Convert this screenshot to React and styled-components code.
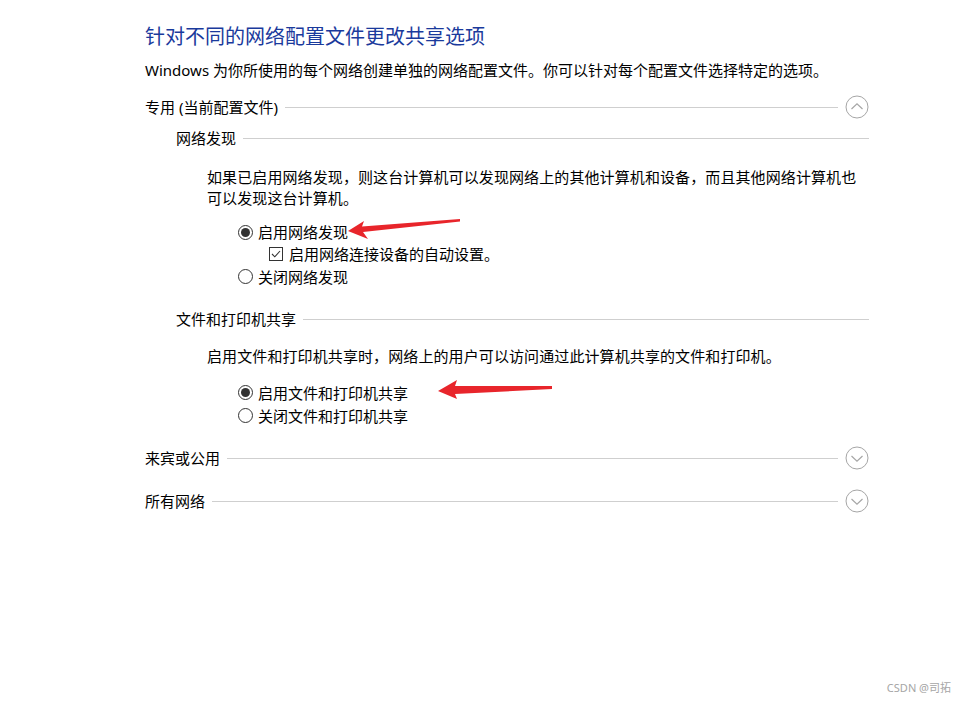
import React from "react";
import styled, { createGlobalStyle } from "styled-components";

const Global = createGlobalStyle`
  html, body { margin: 0; padding: 0; background: #ffffff; }
  body {
    font-family: "Noto Sans", "Noto Sans CJK SC", sans-serif;
    color: #000;
    -webkit-font-smoothing: antialiased;
  }
`;

const Page = styled.div`
  position: relative;
  width: 965px;
  height: 703px;
  box-sizing: border-box;
  padding: 22px 96px 0 145px;
  overflow: hidden;
`;

const Title = styled.h1`
  margin: 0;
  font-weight: 400;
  font-size: 20px;
  line-height: 28px;
  color: #1a3a9c;
  font-family: "Noto Sans CJK SC", sans-serif;
`;

const Desc = styled.p`
  margin: 10px 0 0;
  font-size: 15px;
  line-height: 20px;
`;

const Header = styled.div`
  display: flex;
  align-items: center;
  height: ${(p) => (p.$main ? 24 : 20)}px;
  margin-top: ${(p) => p.$mt}px;
  margin-left: ${(p) => p.$indent || 0}px;
  font-size: 15px;
  line-height: 20px;
`;

const Rule = styled.span`
  flex: 1;
  height: 1px;
  background: #cfcfcf;
  margin-left: 7px;
`;

const Toggle = styled.button`
  all: unset;
  display: flex;
  width: 24px;
  height: 24px;
  margin-left: 7px;
  cursor: pointer;
`;

const Para = styled.p`
  margin: ${(p) => p.$mt}px 0 0 62px;
  width: 660px;
  font-size: 15px;
  line-height: 21px;
  letter-spacing: 0.1px;
`;

const Options = styled.div`
  margin: ${(p) => p.$mt}px 0 0 93px;
  display: flex;
  flex-direction: column;
`;

const OptionRow = styled.label`
  display: flex;
  align-items: center;
  height: ${(p) => p.$h}px;
  padding-left: ${(p) => (p.$sub ? 31 : 0)}px;
  font-size: 15px;
  line-height: 20px;
  gap: ${(p) => (p.$sub ? 6 : 5)}px;
`;

const Radio = styled.span`
  box-sizing: border-box;
  width: 15px;
  height: 15px;
  border-radius: 50%;
  border: 1px solid #333;
  display: flex;
  align-items: center;
  justify-content: center;
  &::after {
    content: "";
    display: ${(p) => (p.$checked ? "block" : "none")};
    width: 9px;
    height: 9px;
    border-radius: 50%;
    background: #333;
  }
`;

const Check = styled.span`
  box-sizing: border-box;
  width: 14px;
  height: 14px;
  border: 1px solid #333;
  display: flex;
  align-items: center;
  justify-content: center;
`;

const Overlay = styled.svg`
  position: absolute;
  left: 0;
  top: 0;
  pointer-events: none;
`;

const Watermark = styled.div`
  position: absolute;
  right: 14px;
  bottom: 8px;
  font-size: 11px;
  color: #a6a6a6;
  font-family: "Noto Sans", "Noto Sans CJK SC", sans-serif;
`;

function Chevron({ up }) {
  return (
    <svg width="24" height="24" viewBox="0 0 24 24">
      <circle cx="12" cy="12" r="11" fill="none" stroke="#a6a6a6" strokeWidth="1" />
      <polyline
        points={up ? "6.5,14 12,8.8 17.5,14" : "6.5,10 12,15.2 17.5,10"}
        fill="none"
        stroke="#a6a6a6"
        strokeWidth="1.2"
      />
    </svg>
  );
}

function SectionHeader({ label, up, mt, main, indent }) {
  return (
    <Header $main={main} $mt={mt} $indent={indent}>
      <span>{label}</span>
      <Rule />
      {main && (
        <Toggle aria-label={label}>
          <Chevron up={up} />
        </Toggle>
      )}
    </Header>
  );
}

function RadioOption({ checked, children, h }) {
  return (
    <OptionRow $h={h}>
      <Radio $checked={checked} />
      <span>{children}</span>
    </OptionRow>
  );
}

export default function App() {
  return (
    <>
      <Global />
      <Page>
        <Title>针对不同的网络配置文件更改共享选项</Title>
        <Desc>Windows 为你所使用的每个网络创建单独的网络配置文件。你可以针对每个配置文件选择特定的选项。</Desc>

        <SectionHeader main up label="专用 (当前配置文件)" mt={15} />
        <SectionHeader label="网络发现" mt={9} indent={31} />
        <Para $mt={19}>
          如果已启用网络发现，则这台计算机可以发现网络上的其他计算机和设备，而且其他网络计算机也可以发现这台计算机。
        </Para>
        <Options $mt={12}>
          <RadioOption checked h={22}>启用网络发现</RadioOption>
          <OptionRow $h={22} $sub>
            <Check>
              <svg width="12" height="12" viewBox="0 0 12 12">
                <polyline points="2,6 4.8,8.8 10,3" fill="none" stroke="#333" strokeWidth="1.1" />
              </svg>
            </Check>
            <span>启用网络连接设备的自动设置。</span>
          </OptionRow>
          <RadioOption h={23}>关闭网络发现</RadioOption>
        </Options>

        <SectionHeader label="文件和打印机共享" mt={21} indent={31} />
        <Para $mt={17}>启用文件和打印机共享时，网络上的用户可以访问通过此计算机共享的文件和打印机。</Para>
        <Options $mt={14}>
          <RadioOption checked h={23}>启用文件和打印机共享</RadioOption>
          <RadioOption h={23}>关闭文件和打印机共享</RadioOption>
        </Options>

        <SectionHeader main label="来宾或公用" mt={19} />
        <SectionHeader main label="所有网络" mt={19} />

        <Overlay width="965" height="703" viewBox="0 0 965 703">
          <polygon points="348,231 364,221 362,226.5 460,219 460,221.5 363,232 368,239" fill="#e8252b" />
          <polygon points="438,391 457,380 455,386 552,386 552,389 455,394 457,399" fill="#e8252b" />
        </Overlay>
        <Watermark>CSDN @司拓</Watermark>
      </Page>
    </>
  );
}
